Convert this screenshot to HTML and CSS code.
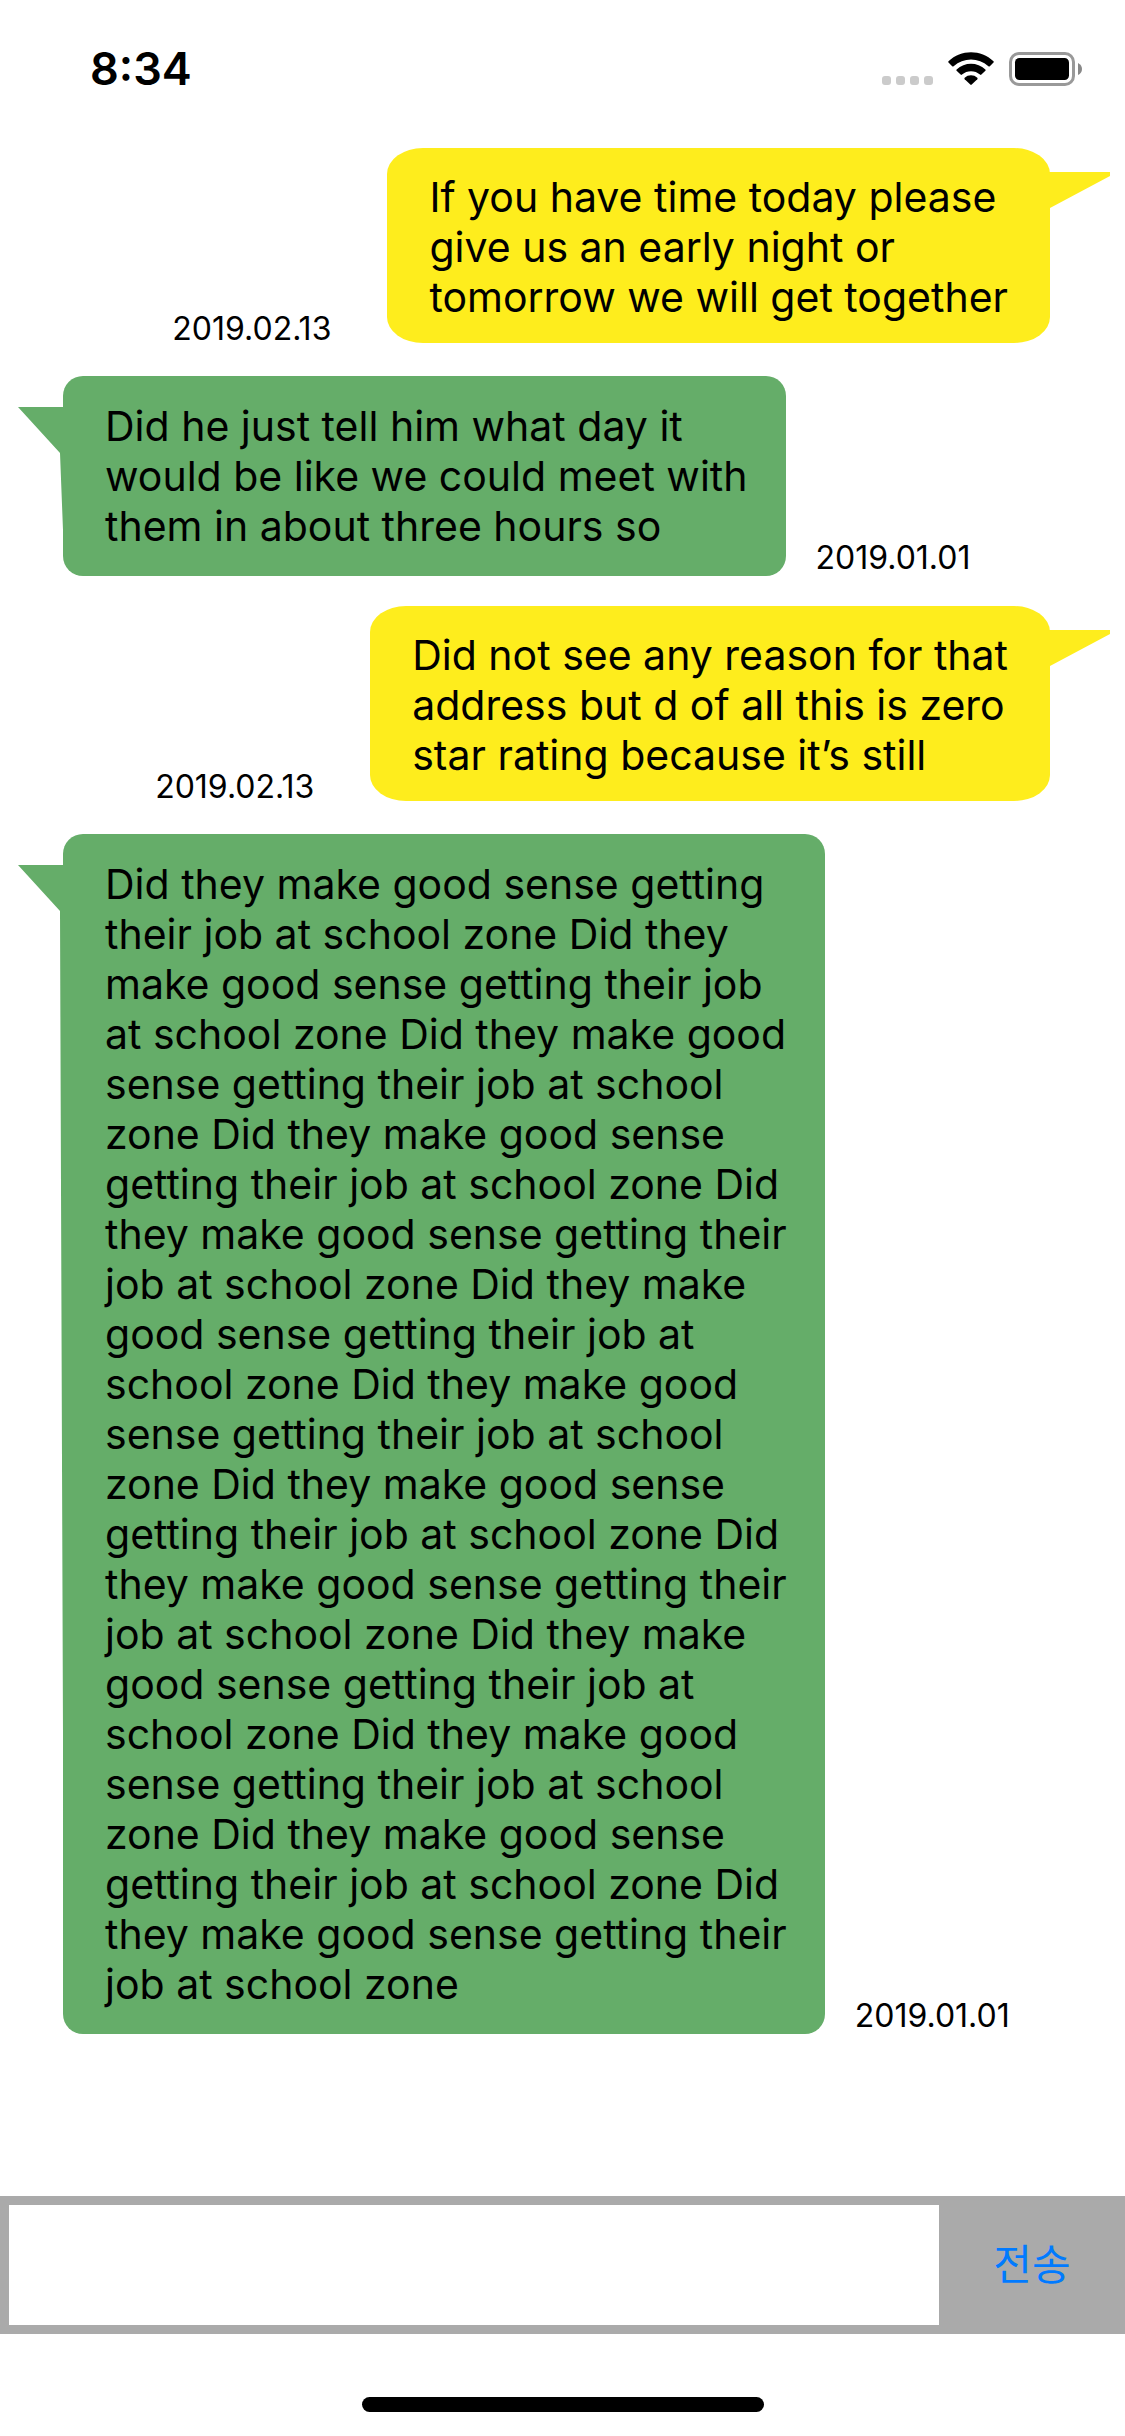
FILE: index.html
```html
<!DOCTYPE html>
<html lang="ko">
<head>
<meta charset="utf-8">
<meta name="viewport" content="width=device-width, initial-scale=1">
<title>Chat</title>
<link rel="stylesheet" href="styles.css">
</head>
<body>
<div class="screen">
  <header class="status-bar">
    <time class="clock">8:34</time>
    <div class="indicators">
      <svg width="51" height="34" viewBox="0 0 51 34" fill="#cbcbcb" aria-label="No signal">
        <rect x="0" y="24" width="9" height="9" rx="3"/>
        <rect x="14" y="24" width="9" height="9" rx="3"/>
        <rect x="28" y="24" width="9" height="9" rx="3"/>
        <rect x="42" y="24" width="9" height="9" rx="3"/>
      </svg>
      <svg width="46" height="34" viewBox="0 0 46 34" aria-label="Wi-Fi">
        <path d="M0.5 9.3C13 -2.8 33 -2.8 45.5 9.3Q46 10 45.5 10.6L41.8 14.2Q41.1 14.7 40.4 14.2C30.5 5.3 15.5 5.3 5.6 14.2Q4.9 14.7 4.2 14.2L0.5 10.6Q0 10 0.5 9.3Z"/>
        <path d="M8.6 17.4C16.7 9.9 29.3 9.9 37.4 17.4Q38 18.1 37.4 18.8L33.4 22.6Q32.7 23.2 32 22.6C27 18.1 19 18.1 14 22.6Q13.3 23.2 12.6 22.6L8.6 18.8Q8 18.1 8.6 17.4Z"/>
        <path d="M16.7 25.8C20.2 22.5 25.8 22.5 29.3 25.8Q30 26.5 29.3 27.2L23.7 32.6Q23 33.2 22.3 32.6L16.7 27.2Q16 26.5 16.7 25.8Z"/>
      </svg>
      <svg width="73" height="34" viewBox="0 0 73 34" aria-label="Battery full">
        <rect x="1.5" y="1.5" width="63" height="31" rx="8.5" fill="none" stroke="#999" stroke-width="3"/>
        <rect x="6" y="6" width="54" height="22" rx="4.5"/>
        <path d="M69 11Q73 13 73 17Q73 21 69 23Z" fill="#888"/>
      </svg>
    </div>
  </header>

  <main class="messages">
    <article class="message sent">
      <time class="date">2019.02.13</time>
      <p class="bubble">If you have time today please
give us an early night or
tomorrow we will get together</p>
    </article>
    <article class="message received">
      <p class="bubble">Did he just tell him what day it
would be like we could meet with
them in about three hours so</p>
      <time class="date">2019.01.01</time>
    </article>
    <article class="message sent">
      <time class="date">2019.02.13</time>
      <p class="bubble">Did not see any reason for that
address but d of all this is zero
star rating because it’s still</p>
    </article>
    <article class="message received">
      <p class="bubble">Did they make good sense getting
their job at school zone Did they
make good sense getting their job
at school zone Did they make good
sense getting their job at school
zone Did they make good sense
getting their job at school zone Did
they make good sense getting their
job at school zone Did they make
good sense getting their job at
school zone Did they make good
sense getting their job at school
zone Did they make good sense
getting their job at school zone Did
they make good sense getting their
job at school zone Did they make
good sense getting their job at
school zone Did they make good
sense getting their job at school
zone Did they make good sense
getting their job at school zone Did
they make good sense getting their
job at school zone</p>
      <time class="date">2019.01.01</time>
    </article>
  </main>

  <form class="composer">
    <input class="composer-input" type="text" aria-label="메시지">
    <button class="send" type="button">전송</button>
  </form>
  <footer class="home"><span class="home-bar"></span></footer>
</div>
</body>
</html>
```
FILE: styles.css
```css
* {
  box-sizing: border-box;
}

body {
  margin: 0;
  background: #fff;
  color: #000;
  font-family: Inter, "Noto Sans CJK KR", sans-serif;
}

.screen {
  display: flex;
  flex-direction: column;
  min-height: 100vh;
}

.status-bar {
  display: flex;
  justify-content: space-between;
  align-items: flex-start;
  height: 147px;
  padding: 52px 43px 0 90px;
}

.clock {
  font-size: 45px;
  font-weight: 600;
  line-height: 34px;
}

.indicators {
  display: flex;
  gap: 15px;
}

.messages {
  flex: 1;
  display: flex;
  flex-direction: column;
  gap: 29px;
}

.message {
  display: flex;
  align-items: flex-end;
}

.sent {
  justify-content: flex-end;
  gap: 56px;
  padding-right: 75px;
}

.received {
  gap: 30px;
  padding-left: 63px;
}

.bubble {
  position: relative;
  margin: 0;
  font-size: 41px;
  line-height: 50px;
  white-space: pre-line;
}

.sent .bubble {
  margin: 1px 0 4px;
  padding: 24px 42px 21px;
  border-radius: 36px / 26px;
  background: #feed1d;
}

.received .bubble {
  padding: 25px 38px 25px 42px;
  border-radius: 20px;
  background: #65ad69;
}

.bubble::before {
  content: "";
  position: absolute;
  background: inherit;
}

/* Pointed tail at the upper right */
.sent .bubble::before {
  top: 24px;
  right: -60px;
  width: 64px;
  height: 36px;
  clip-path: polygon(0 0, 100% 0, 100% 4px, 4px 100%, 0 100%);
}

/* Pointed tail at the upper left, with the edge below it leaning inwards */
.received .bubble::before {
  top: 0;
  bottom: 0;
  left: -45px;
  width: 60px;
  clip-path: polygon(0 31px, 100% 31px, 100% calc(100% - 20px), 46px calc(100% - 20px), 42px 77px);
}

.date {
  font-size: 32px;
  line-height: 36px;
}

.composer {
  display: flex;
  padding: 9px 0 9px 9px;
  background: #aaa;
}

.composer-input {
  flex: 1;
  min-width: 0;
  height: 120px;
  padding: 0 12px;
  border: 0;
  border-radius: 0;
  background: #fff;
  font: inherit;
  font-size: 41px;
}

.send {
  width: 186px;
  padding: 0 0 8px;
  border: 0;
  background: none;
  color: #007aff;
  font: inherit;
  font-size: 42px;
}

.home {
  display: flex;
  justify-content: center;
  padding: 63px 0 24px;
}

.home-bar {
  width: 402px;
  height: 15px;
  border-radius: 8px;
  background: #000;
}
```
